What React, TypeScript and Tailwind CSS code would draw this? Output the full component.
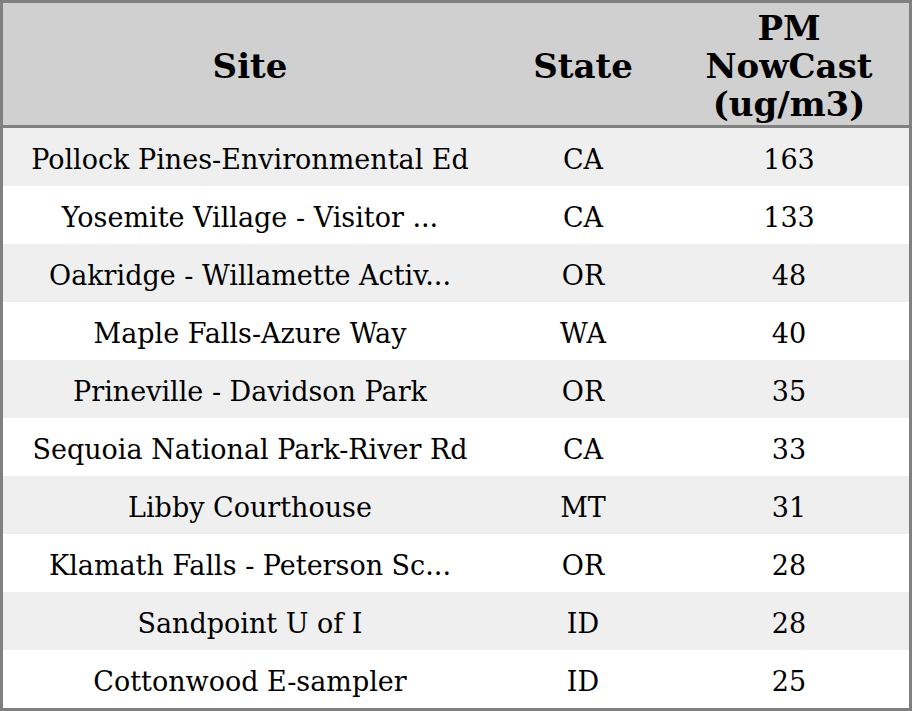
const rows: [string, string, string][] = [
  ["Pollock Pines-Environmental Ed", "CA", "163"],
  ["Yosemite Village - Visitor ...", "CA", "133"],
  ["Oakridge - Willamette Activ...", "OR", "48"],
  ["Maple Falls-Azure Way", "WA", "40"],
  ["Prineville - Davidson Park", "OR", "35"],
  ["Sequoia National Park-River Rd", "CA", "33"],
  ["Libby Courthouse", "MT", "31"],
  ["Klamath Falls - Peterson Sc...", "OR", "28"],
  ["Sandpoint U of I", "ID", "28"],
  ["Cottonwood E-sampler", "ID", "25"],
];

export default function App() {
  return (
    <div
      className="w-[912px] h-[711px] flex flex-col border-[3px] border-[#808080] bg-white text-black"
      style={{ fontFamily: '"DejaVu Serif", serif' }}
    >
      <div className="h-[125px] shrink-0 grid grid-cols-[494px_172px_1fr] items-center pt-[4px] bg-[#d0d0d0] border-b-[3px] border-[#808080] font-bold text-[34px] leading-[38px] text-center">
        <div>Site</div>
        <div>State</div>
        <div>
          PM
          <br />
          NowCast
          <br />
          (ug/m3)
        </div>
      </div>
      <div className="flex-1 flex flex-col">
        {rows.map(([site, state, value], i) => (
          <div
            key={site}
            className={`flex-1 grid grid-cols-[494px_172px_1fr] items-center pt-[6px] text-center text-[27px] leading-[32px] ${
              i % 2 === 0 ? "bg-[#efefef]" : "bg-white"
            }`}
          >
            <div className="whitespace-nowrap">{site}</div>
            <div>{state}</div>
            <div>{value}</div>
          </div>
        ))}
      </div>
    </div>
  );
}
